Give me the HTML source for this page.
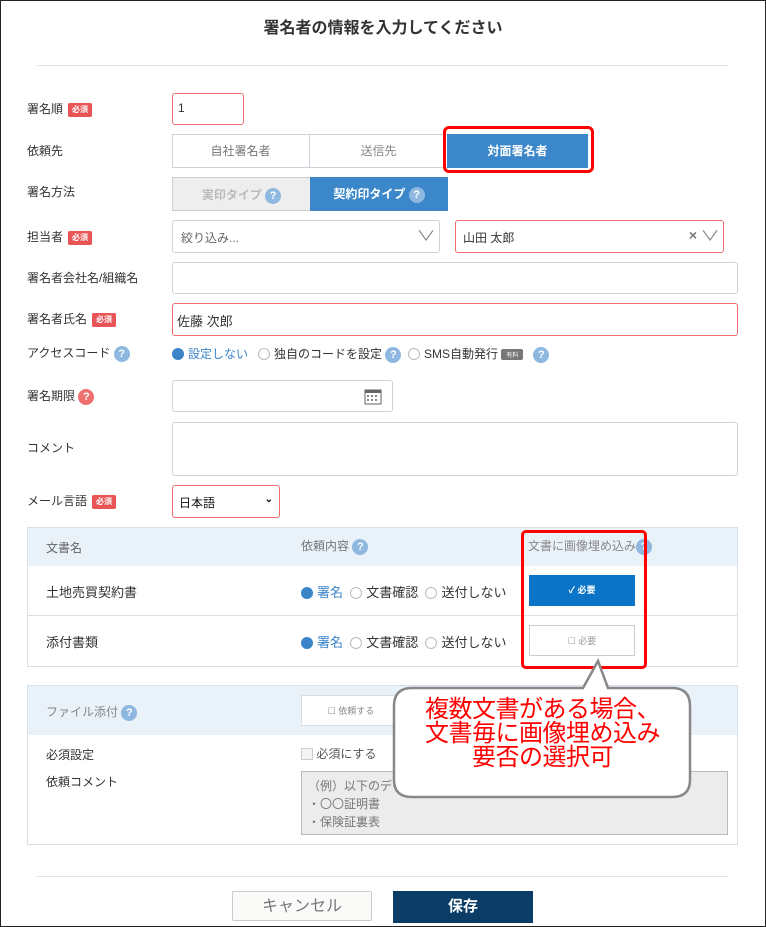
<!DOCTYPE html>
<html><head><meta charset="utf-8"><style>
*{box-sizing:border-box;margin:0;padding:0}
body{width:766px;height:927px;position:relative;background:#fff;font-family:"Liberation Sans","Noto Sans CJK JP",sans-serif;color:#333;font-size:12px;overflow:hidden}
.frame{position:absolute;left:0;top:0;width:766px;height:927px;border:1px solid #222}
.a{position:absolute}
.lbl{position:absolute;left:27px;font-size:12px;color:#333;line-height:16px}
.req{display:inline-block;background:#e95456;color:#fff;font-size:8px;font-weight:bold;padding:1px 4px;border-radius:2px;margin-left:5px;vertical-align:1px;line-height:12px}
.box{position:absolute;border:1px solid #ccd3db;border-radius:3px;background:#fff}
.red{border-color:#ee6b6e}
.q{display:inline-block;width:16px;height:16px;border-radius:50%;background:#8eb8e0;color:#fff;font-size:11px;font-weight:bold;text-align:center;line-height:16px;vertical-align:middle}
.rad{display:inline-block;width:12px;height:12px;border-radius:50%;border:1px solid #bbb;vertical-align:-2px;margin-right:4px;background:#fff}
.rad.on{background:#3b84c8;border-color:#3b84c8}
.cell{position:absolute;text-align:center;font-size:12px}
</style></head><body>
<div class="frame"></div>
<div class="a" style="left:0;width:766px;top:14px;text-align:center;font-size:16px;font-weight:bold;color:#333">署名者の情報を入力してください</div>
<div class="a" style="left:37px;width:691px;top:65px;border-top:1px solid #e2e2e2"></div>

<div class="lbl" style="top:101px">署名順<span class="req">必須</span></div>
<div class="box red" style="left:172px;top:93px;width:72px;height:32px;padding:7px 5px">1</div>

<div class="lbl" style="top:143px">依頼先</div>
<div class="box" style="left:172px;top:134px;width:416px;height:34px;border-radius:0"></div>
<div class="cell" style="left:172px;top:134px;width:138px;height:34px;line-height:34px;color:#777;border-right:1px solid #ccd3db">自社署名者</div>
<div class="cell" style="left:310px;top:134px;width:137px;height:34px;line-height:34px;color:#888">送信先</div>
<div class="cell" style="left:447px;top:134px;width:141px;height:34px;line-height:34px;background:#3b87c9;color:#fff;font-weight:bold">対面署名者</div>
<div class="a" style="left:443px;top:126px;width:151px;height:47px;border:3px solid #f00;border-radius:6px"></div>

<div class="lbl" style="top:184px">署名方法</div>
<div class="cell" style="left:172px;top:177px;width:139px;height:34px;line-height:34px;background:#eee;border:1px solid #ccc;color:#bbb;font-weight:bold">実印タイプ <span class="q">?</span></div>
<div class="cell" style="left:310px;top:177px;width:138px;height:34px;line-height:34px;background:#3b87c9;color:#fff;font-weight:bold">契約印タイプ <span class="q">?</span></div>

<div class="lbl" style="top:229px">担当者<span class="req">必須</span></div>
<div class="box" style="left:172px;top:220px;width:268px;height:33px;padding:8px 8px;color:#666">絞り込み...<span style="position:absolute;right:6px;top:5px;color:#888;font-size:14px;transform:scaleX(1.4)">∨</span></div>
<div class="box red" style="left:455px;top:220px;width:269px;height:33px;padding:8px 7px">山田 太郎<span style="position:absolute;right:26px;top:6px;color:#777;font-size:14px;font-weight:bold">×</span><span style="position:absolute;right:6px;top:5px;color:#888;font-size:14px;transform:scaleX(1.4)">∨</span></div>

<div class="lbl" style="top:270px">署名者会社名/組織名</div>
<div class="box" style="left:172px;top:262px;width:566px;height:32px"></div>

<div class="lbl" style="top:311px">署名者氏名<span class="req">必須</span></div>
<div class="box red" style="left:172px;top:303px;width:566px;height:33px;padding:7px 4px;font-size:13px">佐藤 次郎</div>

<div class="lbl" style="top:345px">アクセスコード <span class="q">?</span></div>
<div class="a" style="left:172px;top:345px;font-size:12px;white-space:nowrap"><span class="rad on"></span><span style="color:#3b84c8">設定しない</span>&nbsp;&nbsp;&nbsp;<span class="rad"></span>独自のコードを設定 <span class="q">?</span>&nbsp;&nbsp;<span class="rad"></span>SMS自動発行 <span style="display:inline-block;background:#777;color:#fff;font-size:6px;padding:1px 5px;border-radius:2px;vertical-align:middle">有料</span>&nbsp;&nbsp;&nbsp;<span class="q">?</span></div>

<div class="lbl" style="top:388px">署名期限 <span class="q" style="background:#f07070">?</span></div>
<div class="box" style="left:172px;top:380px;width:221px;height:32px">
<svg class="a" style="right:10px;top:7px" width="18" height="17" viewBox="0 0 18 17"><rect x="1" y="2" width="16" height="14" fill="none" stroke="#666"/><rect x="1" y="2" width="16" height="3" fill="#666"/><g fill="#888"><rect x="3" y="7" width="2" height="2"/><rect x="7" y="7" width="2" height="2"/><rect x="11" y="7" width="2" height="2"/><rect x="3" y="11" width="2" height="2"/><rect x="7" y="11" width="2" height="2"/><rect x="11" y="11" width="2" height="2"/></g></svg></div>

<div class="lbl" style="top:440px">コメント</div>
<div class="box" style="left:172px;top:422px;width:566px;height:54px"></div>

<div class="lbl" style="top:493px">メール言語<span class="req">必須</span></div>
<div class="box red" style="left:172px;top:485px;width:108px;height:33px;padding:8px 6px;color:#111">日本語<span style="position:absolute;right:6px;top:8px;font-size:10px;font-weight:bold">&#8964;</span></div>

<!-- table -->
<div class="a" style="left:27px;top:527px;width:711px;height:140px;border:1px solid #d8dfe7"></div>
<div class="a" style="left:28px;top:528px;width:709px;height:38px;background:#e9f1f9"></div>
<div class="a" style="left:46px;top:539px;color:#666">文書名</div>
<div class="a" style="left:301px;top:537px;color:#777">依頼内容 <span class="q">?</span></div>
<div class="a" style="left:528px;top:537px;color:#888">文書に画像埋め込み<span class="q">?</span></div>
<div class="a" style="left:28px;top:615px;width:709px;border-top:1px solid #d8dfe7"></div>
<div class="a" style="left:46px;top:582px;font-size:13px">土地売買契約書</div>
<div class="a" style="left:46px;top:632px;font-size:13px">添付書類</div>
<div class="a" style="left:301px;top:582px;font-size:13px;white-space:nowrap"><span class="rad on"></span><span style="color:#3b84c8">署名</span>&nbsp;&nbsp;<span class="rad"></span>文書確認&nbsp;&nbsp;<span class="rad"></span>送付しない</div>
<div class="a" style="left:301px;top:632px;font-size:13px;white-space:nowrap"><span class="rad on"></span><span style="color:#3b84c8">署名</span>&nbsp;&nbsp;<span class="rad"></span>文書確認&nbsp;&nbsp;<span class="rad"></span>送付しない</div>
<div class="cell" style="left:529px;top:575px;width:106px;height:31px;line-height:31px;background:#0b74c6;color:#fff;font-size:9px;font-weight:bold">✓ 必要</div>
<div class="cell" style="left:529px;top:625px;width:106px;height:31px;line-height:31px;border:1px solid #ccc;color:#999;font-size:9px">☐ 必要</div>
<div class="a" style="left:521px;top:530px;width:126px;height:139px;border:3px solid #f00;border-radius:5px"></div>

<!-- section 2 -->
<div class="a" style="left:27px;top:685px;width:711px;height:160px;border:1px solid #d8dfe7"></div>
<div class="a" style="left:28px;top:686px;width:709px;height:49px;background:#e9f1f9"></div>
<div class="a" style="left:46px;top:703px;color:#888">ファイル添付 <span class="q">?</span></div>
<div class="cell" style="left:301px;top:695px;width:100px;height:31px;line-height:31px;border:1px solid #ddd;background:#fff;color:#888;font-size:9px">☐ 依頼する</div>
<div class="a" style="left:46px;top:746px">必須設定</div>
<div class="a" style="left:301px;top:745px;color:#555"><span style="display:inline-block;width:12px;height:12px;border:1px solid #ccc;vertical-align:-2px;background:#f4f4f4"></span> 必須にする</div>
<div class="a" style="left:46px;top:773px">依頼コメント</div>
<div class="a" style="left:301px;top:771px;width:427px;height:64px;border:1px solid #bbb;background:#ececec;color:#777;padding:5px 6px;line-height:18px">（例）以下のデータを添付してください<br>・〇〇証明書<br>・保険証裏表</div>

<!-- callout -->
<svg class="a" style="left:390px;top:655px" width="305" height="148" viewBox="0 0 305 148"><path d="M22 33 H193 L208 6 L218 33 H282 Q300 33 300 51 V125 Q300 142 282 142 H22 Q4 142 4 125 V51 Q4 33 22 33 Z" fill="#fff" stroke="#888" stroke-width="2.5"/></svg>
<div class="a" style="left:390px;top:698px;width:305px;text-align:center;color:#f00;font-size:24px;line-height:24px;letter-spacing:-0.5px">複数文書がある場合、<br>文書毎に画像埋め込み<br>要否の選択可</div>

<div class="a" style="left:37px;top:876px;width:691px;border-top:1px solid #e2e2e2"></div>
<div class="cell" style="left:232px;top:891px;width:140px;height:30px;line-height:30px;border:1px solid #ccc;background:#fafaf8;color:#777;font-size:16px;border-radius:2px">キャンセル</div>
<div class="cell" style="left:393px;top:891px;width:140px;height:32px;line-height:32px;background:#0b3d66;color:#fff;font-size:15px;font-weight:bold">保存</div>
</body></html>
